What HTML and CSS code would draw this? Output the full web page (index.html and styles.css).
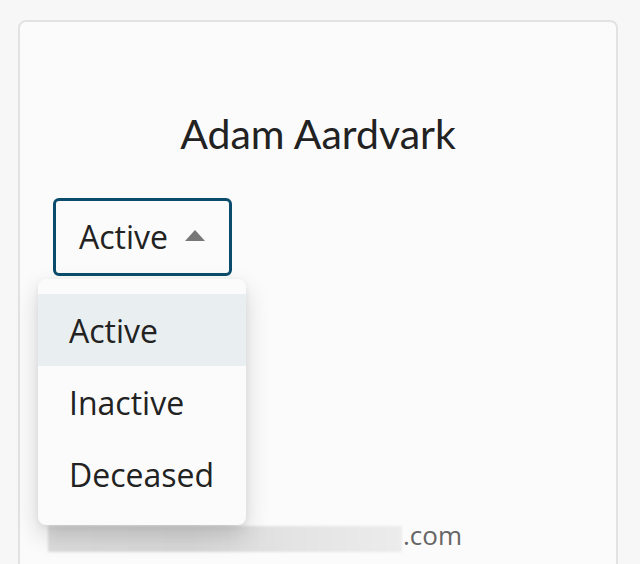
FILE: index.html
```html
<!DOCTYPE html>
<html>
<head>
<meta charset="utf-8">
<link rel="stylesheet" href="styles.css">
</head>
<body>
<div class="card">
  <h1 class="name">Adam Aardvark</h1>
  <div class="status">
    <button class="select">
      <span class="select-label">Active</span>
      <svg class="caret" width="20" height="11" viewBox="0 0 20 11"><polygon points="0,11 10,0 20,11" fill="#777"/></svg>
    </button>
    <ul class="menu">
      <li class="option selected">Active</li>
      <li class="option">Inactive</li>
      <li class="option">Deceased</li>
    </ul>
  </div>
  <div class="email">
    <span class="redact"></span><span class="email-tail">.com</span>
  </div>
</div>
</body>
</html>
```
FILE: styles.css
```css
html, body {
  margin: 0;
  padding: 0;
  background: #f7f7f7;
  overflow: hidden;
}
body {
  padding: 20px 22px 0 18px;
  height: 564px;
  box-sizing: border-box;
}
.card {
  background: #fbfbfb;
  border: 2px solid #e2e2e2;
  border-radius: 8px;
  padding: 88px 0 0 33px;
  min-height: 620px;
  box-sizing: border-box;
}
.name {
  margin: 0 33px 0 0;
  font-family: Lato, "Liberation Sans", sans-serif;
  font-weight: 400;
  font-size: 41px;
  line-height: 48px;
  color: #222;
  text-align: center;
}
.status {
  position: relative;
  margin-top: 40px;
}
.select {
  display: flex;
  align-items: center;
  width: 179px;
  height: 78px;
  box-sizing: border-box;
  border: 3px solid #0b4c6c;
  border-radius: 6px;
  background: #fbfbfb;
  padding: 0 0 0 23px;
  margin: 0;
  font-family: "Open Sans", "Noto Sans", sans-serif;
  font-size: 32px;
  color: #222;
}
.select-label {
  line-height: 40px;
}
.caret {
  margin-left: 17px;
  margin-top: -4px;
}
.menu {
  position: absolute;
  left: -15px;
  top: 81px;
  width: 208px;
  margin: 0;
  padding: 15px 0;
  list-style: none;
  background: #fbfbfb;
  border-radius: 8px;
  box-shadow: 0 10px 24px rgba(0, 0, 0, 0.16), 0 2px 6px rgba(0, 0, 0, 0.06);
  z-index: 2;
}
.option {
  height: 72px;
  display: flex;
  align-items: center;
  padding-left: 31px;
  font-family: "Open Sans", "Noto Sans", sans-serif;
  font-size: 32px;
  color: #222;
}
.option.selected {
  background: #e9eef0;
}
.email {
  display: flex;
  align-items: flex-start;
  margin-top: 241px;
  margin-left: -5px;
}
.redact {
  display: block;
  width: 354px;
  height: 26px;
  margin-top: 9px;
  background: linear-gradient(90deg, #dcdcdc 0%, #d8d8d8 40%, #e4e4e4 70%, #ececec 100%);
  filter: blur(1px);
}
.email-tail {
  font-family: "Open Sans", "Noto Sans", sans-serif;
  font-size: 26px;
  line-height: 36px;
  color: #666;
  margin-left: 1px;
}
```
